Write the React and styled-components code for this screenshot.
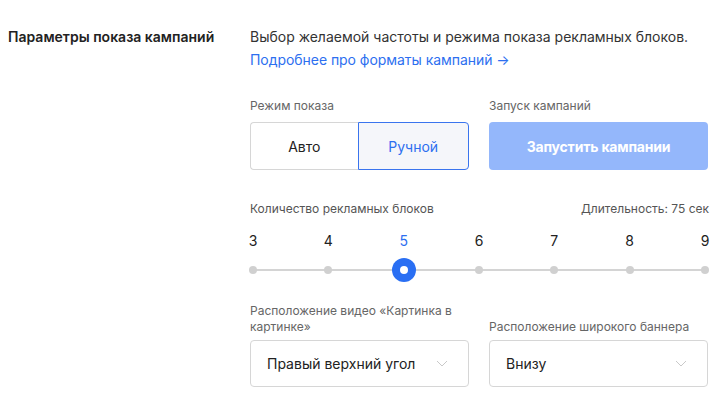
import React, { useState } from "react";
import styled, { createGlobalStyle } from "styled-components";

const Global = createGlobalStyle`
  html, body { margin: 0; padding: 0; background: #fff; }
  body { font-family: Inter, "Noto Sans", Arial, sans-serif; color: #222; -webkit-font-smoothing: antialiased; }
  * { box-sizing: border-box; }
`;

const Page = styled.div`
  display: flex;
  padding: 27px 0 0 8px;
  width: 728px;
`;

const Aside = styled.div`
  width: 242px;
  flex: none;
`;

const Title = styled.h2`
  margin: 0;
  font-size: 14px;
  line-height: 20px;
  font-weight: 600;
  color: #222;
`;

const Main = styled.div`
  width: 459px;
  display: flex;
  flex-direction: column;
`;

const Desc = styled.p`
  margin: 0;
  font-size: 14px;
  line-height: 20px;
  color: #333;
`;

const Link = styled.a`
  margin-top: 3px;
  font-size: 14px;
  line-height: 20px;
  color: #2d6ff0;
  text-decoration: none;
  letter-spacing: -0.05px;
`;

const TwoCols = styled.div`
  display: grid;
  grid-template-columns: 219px 219px;
  column-gap: 20px;
  align-items: end;
  margin-top: ${(p) => p.$mt || 0}px;
`;

const Field = styled.div`
  display: flex;
  flex-direction: column;
`;

const Label = styled.div`
  font-size: 12px;
  line-height: 16px;
  color: #666;
  margin-bottom: ${(p) => p.$mb ?? 8}px;
`;

const Segmented = styled.div`
  display: flex;
  height: 48px;
`;

const Segment = styled.button`
  flex: ${(p) => p.$grow};
  border: 1px solid ${(p) => (p.$active ? "#3a74ee" : "#d6d6d6")};
  background: ${(p) => (p.$active ? "#f5f6fa" : "#fff")};
  color: ${(p) => (p.$active ? "#2d6ff0" : "#222")};
  font-family: inherit;
  font-size: 14px;
  cursor: pointer;
  padding: 0;
  &:first-child {
    border-radius: 4px 0 0 4px;
    border-right: none;
  }
  &:last-child {
    border-radius: 0 4px 4px 0;
  }
`;

const LaunchButton = styled.button`
  height: 48px;
  border: none;
  border-radius: 4px;
  background: #94b7fb;
  color: #fff;
  font-family: inherit;
  font-weight: 700;
  font-size: 14px;
  letter-spacing: -0.2px;
`;

const SliderHead = styled.div`
  display: flex;
  justify-content: space-between;
  margin-top: 31px;
`;

const SliderHeadText = styled.span`
  font-size: 12px;
  line-height: 16px;
  color: #555;
`;

const Numbers = styled.div`
  display: flex;
  justify-content: space-between;
  margin-top: 14px;
  margin-left: -1px;
`;

const Num = styled.span`
  width: 8px;
  display: flex;
  justify-content: center;
  font-size: 14px;
  line-height: 20px;
  color: ${(p) => (p.$active ? "#2d6ff0" : "#222")};
`;

const Track = styled.div`
  position: relative;
  margin-top: 7px;
  margin-left: -1px;
  height: 24px;
  display: flex;
  align-items: center;
  justify-content: space-between;
  &::before {
    content: "";
    position: absolute;
    left: 4px;
    right: 4px;
    top: 11px;
    height: 2px;
    background: #d4d4d4;
  }
`;

const Stop = styled.span`
  position: relative;
  width: 8px;
  height: 8px;
  display: flex;
  align-items: center;
  justify-content: center;
  &::after {
    content: "";
    flex: none;
    width: ${(p) => (p.$active ? 24 : 8)}px;
    height: ${(p) => (p.$active ? 24 : 8)}px;
    border-radius: 50%;
    background: ${(p) => (p.$active ? "#2a6ff3" : "#d0d0d0")};
  }
  &::before {
    content: "";
    display: ${(p) => (p.$active ? "block" : "none")};
    position: absolute;
    width: 8px;
    height: 8px;
    border-radius: 50%;
    background: #fff;
    z-index: 1;
  }
`;

const Select = styled.div`
  height: 47px;
  border: 1px solid #d6d6d6;
  border-radius: 4px;
  display: flex;
  align-items: center;
  justify-content: space-between;
  padding: 0 20px 0 16px;
  font-size: 14px;
  color: #222;
`;

const Chevron = () => (
  <svg width="12" height="7" viewBox="0 0 12 7" fill="none">
    <path d="M1 1l5 5 5-5" stroke="#c9c9c9" strokeWidth="1" />
  </svg>
);

export default function App() {
  const [mode, setMode] = useState("manual");
  const values = [3, 4, 5, 6, 7, 8, 9];
  const current = 5;
  return (
    <>
      <Global />
      <Page>
        <Aside>
          <Title>Параметры показа кампаний</Title>
        </Aside>
        <Main>
          <Desc>Выбор желаемой частоты и режима показа рекламных блоков.</Desc>
          <Link href="#">Подробнее про форматы кампаний →</Link>
          <TwoCols $mt={28}>
            <Field>
              <Label>Режим показа</Label>
              <Segmented>
                <Segment $grow={108} $active={mode === "auto"} onClick={() => setMode("auto")}>
                  Авто
                </Segment>
                <Segment $grow={111} $active={mode === "manual"} onClick={() => setMode("manual")}>
                  Ручной
                </Segment>
              </Segmented>
            </Field>
            <Field>
              <Label>Запуск кампаний</Label>
              <LaunchButton>Запустить кампании</LaunchButton>
            </Field>
          </TwoCols>
          <SliderHead>
            <SliderHeadText>Количество рекламных блоков</SliderHeadText>
            <SliderHeadText>Длительность: 75 сек</SliderHeadText>
          </SliderHead>
          <Numbers>
            {values.map((v) => (
              <Num key={v} $active={v === current}>
                {v}
              </Num>
            ))}
          </Numbers>
          <Track>
            {values.map((v) => (
              <Stop key={v} $active={v === current} />
            ))}
          </Track>
          <TwoCols $mt={21}>
            <Field>
              <Label $mb={5}>Расположение видео «Картинка в картинке»</Label>
              <Select>
                Правый верхний угол
                <Chevron />
              </Select>
            </Field>
            <Field>
              <Label $mb={5}>Расположение широкого баннера</Label>
              <Select>
                Внизу
                <Chevron />
              </Select>
            </Field>
          </TwoCols>
        </Main>
      </Page>
    </>
  );
}
